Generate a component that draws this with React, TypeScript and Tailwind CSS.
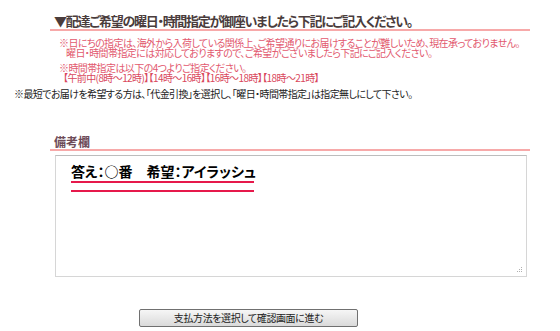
import React from "react";

export default function App() {
  return (
    <div
      className="w-[560px] h-[331px] bg-white overflow-hidden relative [font-feature-settings:'palt']"
      style={{ fontFamily: "'Noto Sans CJK JP', sans-serif" }}
    >
      {/* Delivery heading */}
      <div className="ml-[50px] w-[480px] pt-[12px] border-b-2 border-[#f7a9a9]">
        <div className="pl-[4px] h-[17px] text-[13px] leading-[17px] font-bold text-[#4a3c3c] tracking-[-1.3px] whitespace-nowrap">
          ▼配達ご希望の曜日・時間指定が御座いましたら下記にご記入ください。
        </div>
      </div>
      <div className="ml-[59px] mt-[7px] text-[10px] text-[#e2586e] tracking-[-0.6px] whitespace-nowrap">
        <div className="h-[10px] leading-[10px]">※日にちの指定は、海外から入荷している関係上、ご希望通りにお届けすることが難しいため、現在承っておりません。</div>
        <div className="h-[10px] leading-[10px] pl-[7px]">曜日・時間帯指定には対応しておりますので、ご希望がございましたら下記にご記入ください。</div>
        <div className="h-[10px] leading-[10px] mt-[5px]">※時間帯指定は以下の4つよりご指定ください。</div>
        <div className="h-[10px] leading-[10px] pl-[4px] text-[#d9475c]">【午前中(8時～12時)】【14時～16時】【16時～18時】【18時～21時】</div>
      </div>
      <div className="ml-[14px] mt-[6px] h-[10px] text-[10px] leading-[10px] text-[#222] tracking-[-0.6px] whitespace-nowrap">
        ※最短でお届けを希望する方は、「代金引換」を選択し、「曜日・時間帯指定」は指定無しにして下さい。
      </div>

      {/* Remarks */}
      <div className="ml-[50px] w-[480px] mt-[36px] border-b-2 border-[#f7a9a9]">
        <div className="pl-[4px] h-[14px] text-[12px] leading-[14px] font-bold text-[#6e4b58]">備考欄</div>
      </div>
      <div className="ml-[55px] mt-[4px] w-[472px] h-[122px] border border-[#d6d6d6] border-t-[#bdbdbd] relative bg-white">
        <div className="ml-[15px] pt-[7px] w-[183px]">
          <div className="h-[17px] text-[14px] leading-[17px] font-bold text-black whitespace-nowrap">
            答え：○番　希望：アイラッシュ
          </div>
          <svg className="block mt-[1px]" width="183" height="12" viewBox="0 0 183 12">
            <rect x="0" y="0" width="183" height="2" fill="#e6194b" />
            <rect x="0" y="9" width="183" height="2" fill="#e6194b" />
          </svg>
        </div>
        <svg className="absolute right-[3px] bottom-[3px]" width="6" height="6" viewBox="0 0 6 6">
          <rect x="4" y="0" width="1" height="1" fill="#b0b0b0" />
          <rect x="2" y="2" width="1" height="1" fill="#b0b0b0" />
          <rect x="4" y="2" width="1" height="1" fill="#b0b0b0" />
          <rect x="0" y="4" width="1" height="1" fill="#b0b0b0" />
          <rect x="2" y="4" width="1" height="1" fill="#b0b0b0" />
          <rect x="4" y="4" width="1" height="1" fill="#b0b0b0" />
        </svg>
      </div>

      {/* Button */}
      <div className="ml-[139px] mt-[32px] flex">
        <button className="w-[219px] h-[18px] rounded-[2px] border border-[#707070] bg-gradient-to-b from-[#f6f6f6] to-[#dadada] text-[10px] leading-[16px] text-[#222] tracking-[-0.4px] flex items-center justify-center">
          支払方法を選択して確認画面に進む
        </button>
      </div>
    </div>
  );
}
